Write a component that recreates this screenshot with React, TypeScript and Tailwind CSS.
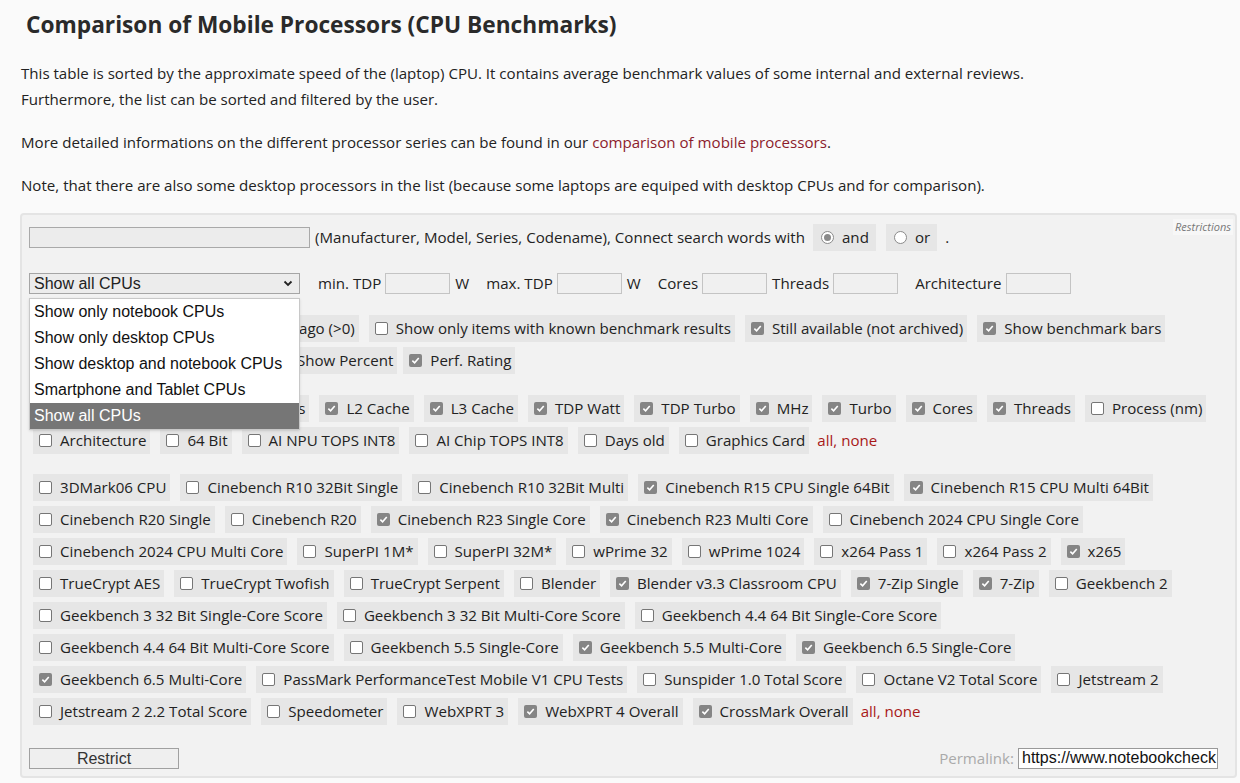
import React from "react";

type Item = [string, boolean];

const Check = ({ on }: { on: boolean }) =>
  on ? (
    <span className="inline-flex h-[13px] w-[13px] shrink-0 items-center justify-center rounded-[2px] bg-[#858585]">
      <svg width="9" height="9" viewBox="0 0 10 10">
        <path d="M1.5 5.2 L4 7.6 L8.6 2.3" fill="none" stroke="#fff" strokeWidth="1.8" />
      </svg>
    </span>
  ) : (
    <span className="inline-block h-[13px] w-[13px] shrink-0 rounded-[2px] border border-[#767676] bg-white" />
  );

const Box = ({ label, on, tight }: { label: string; on: boolean; tight?: boolean }) => (
  <label
    className={`flex h-[27px] items-center whitespace-nowrap bg-[#e6e6e6] pl-[6px] pr-[4px] ${
      tight ? "mr-[6px]" : "mr-[10px]"
    }`}
  >
    <Check on={on} />
    <span className="ml-[8px]">{label}</span>
  </label>
);

const Radio = ({ label, on }: { label: string; on: boolean }) => (
  <label className="flex h-[27px] items-center bg-[#e6e6e6] pl-[8px] pr-[7px]">
    <span className="flex h-[13px] w-[13px] items-center justify-center rounded-full border border-[#8a8a8a] bg-white">
      {on && <span className="h-[7px] w-[7px] rounded-full bg-[#8a8a8a]" />}
    </span>
    <span className="ml-[8px]">{label}</span>
  </label>
);

const Input = ({ w }: { w: string }) => (
  <span className={`inline-block h-[21px] ${w} border border-[#c4c4c4] bg-[#f0f0f0]`} />
);

const AllNone = () => (
  <span className="ml-[-2px] text-[#a81818]">
    all, <span>none</span>
  </span>
);

const benchRows: Item[][] = [
  [
    ["3DMark06 CPU", false],
    ["Cinebench R10 32Bit Single", false],
    ["Cinebench R10 32Bit Multi", false],
    ["Cinebench R15 CPU Single 64Bit", true],
    ["Cinebench R15 CPU Multi 64Bit", true],
  ],
  [
    ["Cinebench R20 Single", false],
    ["Cinebench R20", false],
    ["Cinebench R23 Single Core", true],
    ["Cinebench R23 Multi Core", true],
    ["Cinebench 2024 CPU Single Core", false],
  ],
  [
    ["Cinebench 2024 CPU Multi Core", false],
    ["SuperPI 1M*", false],
    ["SuperPI 32M*", false],
    ["wPrime 32", false],
    ["wPrime 1024", false],
    ["x264 Pass 1", false],
    ["x264 Pass 2", false],
    ["x265", true],
  ],
  [
    ["TrueCrypt AES", false],
    ["TrueCrypt Twofish", false],
    ["TrueCrypt Serpent", false],
    ["Blender", false],
    ["Blender v3.3 Classroom CPU", true],
    ["7-Zip Single", true],
    ["7-Zip", true],
    ["Geekbench 2", false],
  ],
  [
    ["Geekbench 3 32 Bit Single-Core Score", false],
    ["Geekbench 3 32 Bit Multi-Core Score", false],
    ["Geekbench 4.4 64 Bit Single-Core Score", false],
  ],
  [
    ["Geekbench 4.4 64 Bit Multi-Core Score", false],
    ["Geekbench 5.5 Single-Core", false],
    ["Geekbench 5.5 Multi-Core", true],
    ["Geekbench 6.5 Single-Core", true],
  ],
  [
    ["Geekbench 6.5 Multi-Core", true],
    ["PassMark PerformanceTest Mobile V1 CPU Tests", false],
    ["Sunspider 1.0 Total Score", false],
    ["Octane V2 Total Score", false],
    ["Jetstream 2", false],
  ],
  [
    ["Jetstream 2 2.2 Total Score", false],
    ["Speedometer", false],
    ["WebXPRT 3", false],
    ["WebXPRT 4 Overall", true],
    ["CrossMark Overall", true],
  ],
];

const columnRow1: Item[] = [
  ["Series", true],
  ["L2 Cache", true],
  ["L3 Cache", true],
  ["TDP Watt", true],
  ["TDP Turbo", true],
  ["MHz", true],
  ["Turbo", true],
  ["Cores", true],
  ["Threads", true],
  ["Process (nm)", false],
];

const columnRow2: Item[] = [
  ["Architecture", false],
  ["64 Bit", false],
  ["AI NPU TOPS INT8", false],
  ["AI Chip TOPS INT8", false],
  ["Days old", false],
  ["Graphics Card", false],
];

const options = [
  "Show only notebook CPUs",
  "Show only desktop CPUs",
  "Show desktop and notebook CPUs",
  "Smartphone and Tablet CPUs",
  "Show all CPUs",
];

export default function App() {
  return (
    <div className="min-h-screen bg-[#fafafa] font-['Open_Sans',sans-serif] text-[15.1px] text-[#222]">
      <h1 className="pl-[26px] pt-[9px] text-[22.7px] font-bold leading-[32px] text-[#2a2a2a]">
        Comparison of Mobile Processors (CPU Benchmarks)
      </h1>

      <div className="mt-[19px] px-[21px] leading-[26px]">
        <p>
          This table is sorted by the approximate speed of the (laptop) CPU. It contains average benchmark values of
          some internal and external reviews.
          <br />
          Furthermore, the list can be sorted and filtered by the user.
        </p>
        <p className="mt-[17px]">
          More detailed informations on the different processor series can be found in our{" "}
          <a className="text-[#8c1c2c]">comparison of mobile processors</a>.
        </p>
        <p className="mt-[17px]">
          Note, that there are also some desktop processors in the list (because some laptops are equiped with desktop
          CPUs and for comparison).
        </p>
      </div>

      {/* Restrictions panel */}
      <div className="relative ml-[20px] mr-[3px] mt-[15px] rounded-[4px] border-2 border-[#e4e4e4] bg-[#f2f2f2] pb-[6px] pl-[7px] pt-[9px]">
        <span className="absolute right-[2px] top-[4px] bg-[#f7f7f7] px-[2px] text-[11px] italic leading-[16px] text-[#777]">
          Restrictions
        </span>

        {/* search row */}
        <div className="flex h-[27px] items-center">
          <span className="inline-block h-[21px] w-[281px] border border-[#a9a9a9] bg-[#ececec]" />
          <span className="ml-[5px]">(Manufacturer, Model, Series, Codename), Connect search words with</span>
          <span className="ml-[8px]">
            <Radio label="and" on={true} />
          </span>
          <span className="ml-[10px]">
            <Radio label="or" on={false} />
          </span>
          <span className="ml-[8px]">.</span>
        </div>

        {/* select row */}
        <div className="mt-[22px] flex h-[21px] items-center">
          <div className="relative">
            <div className="flex h-[21px] w-[271px] items-center justify-between border border-[#a5a5a5] bg-[#ececec] pl-[4px] pr-[6px] font-['Liberation_Sans',Arial,sans-serif] text-[16px]">
              <span>Show all CPUs</span>
              <svg width="10" height="7" viewBox="0 0 10 7">
                <path d="M1.5 1.5 L5 5 L8.5 1.5" fill="none" stroke="#222" strokeWidth="1.8" />
              </svg>
            </div>
            <ul className="absolute left-0 top-[25px] z-10 w-[271px] border border-[#c8c8c8] bg-white font-['Liberation_Sans',Arial,sans-serif] text-[16px] shadow-sm">
              {options.map((o) => (
                <li
                  key={o}
                  className={`flex h-[26px] items-center pl-[4px] ${
                    o === "Show all CPUs" ? "bg-[#767676] text-white" : "text-[#111]"
                  }`}
                >
                  {o}
                </li>
              ))}
            </ul>
          </div>
          <span className="ml-[18px] mr-[4px]">min. TDP</span>
          <Input w="w-[65px]" />
          <span className="ml-[5px]">W</span>
          <span className="ml-[17px] mr-[4px]">max. TDP</span>
          <Input w="w-[65px]" />
          <span className="ml-[5px]">W</span>
          <span className="ml-[17px] mr-[4px]">Cores</span>
          <Input w="w-[65px]" />
          <span className="ml-[5px] mr-[4px]">Threads</span>
          <Input w="w-[65px]" />
          <span className="ml-[17px] mr-[4px]">Architecture</span>
          <Input w="w-[65px]" />
        </div>

        {/* options rows (partly covered by the open select) */}
        <div className="ml-[4px] mt-[21px] flex">
          <label className="mr-[10px] flex h-[27px] items-center whitespace-nowrap bg-[#e6e6e6] pl-[6px] pr-[4px]">
            <Check on={false} />
            <span className="ml-[8px] w-[239px]" />
            <span>ago (&gt;0)</span>
          </label>
          <Box label="Show only items with known benchmark results" on={false} />
          <Box label="Still available (not archived)" on={true} />
          <Box label="Show benchmark bars" on={true} />
        </div>
        <div className="ml-[4px] mt-[5px] flex">
          <span className="mr-[10px] h-[27px] w-[227px] bg-[#e6e6e6]" />
          <Box label="Show Percent" on={true} tight />
          <Box label="Perf. Rating" on={true} />
        </div>

        <div className="ml-[4px] mt-[21px] flex">
          <span className="mr-[10px] h-[27px] w-[193px] bg-[#e6e6e6]" />
          {columnRow1.map(([l, on]) => (
            <Box key={l} label={l} on={on} />
          ))}
        </div>
        <div className="ml-[4px] mt-[5px] flex items-center">
          {columnRow2.map(([l, on]) => (
            <Box key={l} label={l} on={on} />
          ))}
          <AllNone />
        </div>

        {/* benchmark rows */}
        <div className="ml-[4px] mt-[20px] flex flex-col gap-[5px]">
          {benchRows.map((row, i) => (
            <div key={i} className="flex items-center">
              {row.map(([l, on]) => (
                <Box key={l} label={l} on={on} />
              ))}
              {i === benchRows.length - 1 && <AllNone />}
            </div>
          ))}
        </div>

        {/* bottom */}
        <div className="mt-[22px] flex items-center justify-between pr-[17px]">
          <button className="h-[21px] w-[150px] border border-[#a0a0a0] bg-[#efefef] font-['Liberation_Sans',Arial,sans-serif] text-[16px] leading-[19px] text-[#333]">
            Restrict
          </button>
          <div className="flex items-center">
            <span className="mr-[4px] text-[#aaa]">Permalink:</span>
            <span className="flex h-[21px] w-[200px] items-center overflow-hidden whitespace-nowrap border border-[#999] bg-white pl-[3px] font-['Liberation_Sans',Arial,sans-serif] text-[16px] text-[#111]">
              https://www.notebookcheck
            </span>
          </div>
        </div>
      </div>
    </div>
  );
}
